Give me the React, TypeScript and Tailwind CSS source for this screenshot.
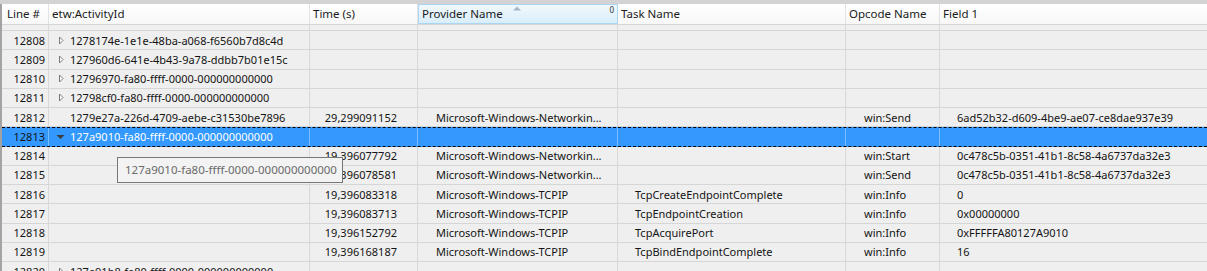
import React from "react";

type Row = {
  line: string;
  id?: string;
  tri?: "closed" | "open";
  time?: string;
  provider?: string;
  task?: string;
  opcode?: string;
  field?: string;
  selected?: boolean;
};

const rows: Row[] = [
  { line: "12807", id: "1278a5b4-2e16-4300-8c1a-4c29e0a9e5c8", tri: "closed" },
  { line: "12808", id: "1278174e-1e1e-48ba-a068-f6560b7d8c4d", tri: "closed" },
  { line: "12809", id: "127960d6-641e-4b43-9a78-ddbb7b01e15c", tri: "closed" },
  { line: "12810", id: "12796970-fa80-ffff-0000-000000000000", tri: "closed" },
  { line: "12811", id: "12798cf0-fa80-ffff-0000-000000000000", tri: "closed" },
  {
    line: "12812",
    id: "1279e27a-226d-4709-aebe-c31530be7896",
    time: "29,299091152",
    provider: "Microsoft-Windows-Networkin...",
    opcode: "win:Send",
    field: "6ad52b32-d609-4be9-ae07-ce8dae937e39",
  },
  { line: "12813", id: "127a9010-fa80-ffff-0000-000000000000", tri: "open", selected: true },
  {
    line: "12814",
    time: "19,396077792",
    provider: "Microsoft-Windows-Networkin...",
    opcode: "win:Start",
    field: "0c478c5b-0351-41b1-8c58-4a6737da32e3",
  },
  {
    line: "12815",
    time: "19,396078581",
    provider: "Microsoft-Windows-Networkin...",
    opcode: "win:Send",
    field: "0c478c5b-0351-41b1-8c58-4a6737da32e3",
  },
  {
    line: "12816",
    time: "19,396083318",
    provider: "Microsoft-Windows-TCPIP",
    task: "TcpCreateEndpointComplete",
    opcode: "win:Info",
    field: "0",
  },
  {
    line: "12817",
    time: "19,396083713",
    provider: "Microsoft-Windows-TCPIP",
    task: "TcpEndpointCreation",
    opcode: "win:Info",
    field: "0x00000000",
  },
  {
    line: "12818",
    time: "19,396152792",
    provider: "Microsoft-Windows-TCPIP",
    task: "TcpAcquirePort",
    opcode: "win:Info",
    field: "0xFFFFFA80127A9010",
  },
  {
    line: "12819",
    time: "19,396168187",
    provider: "Microsoft-Windows-TCPIP",
    task: "TcpBindEndpointComplete",
    opcode: "win:Info",
    field: "16",
  },
  { line: "12820", id: "127a91b8-fa80-ffff-0000-000000000000", tri: "closed" },
];

const ClosedTri = () => (
  <svg width="6" height="9" viewBox="0 0 6 9" className="shrink-0">
    <path d="M1.5 1 L5 4.5 L1.5 8 Z" fill="#ffffff" stroke="#7a7a7a" strokeWidth="1" />
  </svg>
);

const OpenTri = () => (
  <svg width="9" height="6" viewBox="0 0 9 6" className="shrink-0">
    <path d="M0.5 1 L8.5 1 L4.5 5 Z" fill="#3c3c3c" />
  </svg>
);

const DataRow = ({ r }: { r: Row }) => {
  const sel = r.selected;
  const sep = sel ? "border-r border-[#7dbcff]" : "border-r border-[#d9d9d9]";
  const txt = sel ? "text-white" : "text-[#141414]";
  return (
    <div
      className={
        "flex h-[19.25px] items-center " +
        (sel
          ? "bg-[#3399ff] border-y border-dashed border-black"
          : "border-b border-[#d6d6d6]")
      }
    >
      <div className={"w-[47px] h-full flex items-center justify-end pr-[3px] text-[#141414] " + sep}>
        {r.line}
      </div>
      <div className={"w-[261px] h-full flex items-center gap-[5px] pl-[7px] " + txt + " " + sep}>
        <span className="w-[9px] flex justify-center">
          {r.tri === "closed" && <ClosedTri />}
          {r.tri === "open" && <OpenTri />}
        </span>
        <span className="whitespace-nowrap">{r.id}</span>
      </div>
      <div className={"w-[108px] h-full flex items-center justify-end pr-[20px] " + txt + " " + sep}>
        {r.time}
      </div>
      <div className={"w-[200px] h-full flex items-center pl-[18px] overflow-hidden whitespace-nowrap " + txt + " " + sep}>
        {r.provider}
      </div>
      <div className={"w-[228px] h-full flex items-center pl-[17px] whitespace-nowrap " + txt + " " + sep}>
        {r.task}
      </div>
      <div className={"w-[94px] h-full flex items-center pl-[18px] " + txt + " " + sep}>
        {r.opcode}
      </div>
      <div className={"flex-1 h-full flex items-center pl-[17px] whitespace-nowrap " + txt}>
        {r.field}
      </div>
    </div>
  );
};

export default function App() {
  return (
    <div
      className="relative w-[1207px] h-[271px] overflow-hidden bg-[#efefef] text-[11px] leading-none"
      style={{ fontFamily: '"Noto Sans", "Open Sans", sans-serif' }}
    >
      <div className="h-[4px] bg-[#d3d3d3]" />
      <div className="flex h-[267px] border-l-2 border-[#a3a3a3]">
        <div className="flex-1 flex flex-col">
          {/* column headers */}
          <div className="flex h-[21px] shrink-0 bg-gradient-to-b from-white to-[#f7f7f7] border-b border-[#d5d5d5] text-[#1a1a1a] text-[11.5px]">
            <div className="w-[47px] flex items-center pl-[5px] border-r border-[#e3e3e3]">Line #</div>
            <div className="w-[261px] flex items-center pl-[3px] border-r border-[#e3e3e3]">etw:ActivityId</div>
            <div className="w-[108px] flex items-center pl-[3px] border-r border-[#e3e3e3]">Time (s)</div>
            <div className="relative w-[200px] flex items-center pl-[3px] bg-gradient-to-b from-[#f0f8fd] to-[#d9eefa] border border-[#a9d7f3]">
              Provider Name
              <svg width="8" height="5" viewBox="0 0 8 5" className="absolute left-[94px] top-[1px]">
                <path d="M0 4.5 L4 0.5 L8 4.5 Z" fill="#a3b7c9" />
              </svg>
              <span className="absolute right-[3px] top-[1px] text-[8px] text-[#333]">0</span>
            </div>
            <div className="w-[228px] flex items-center pl-[3px] border-r border-[#e3e3e3]">Task Name</div>
            <div className="w-[94px] flex items-center pl-[3px] border-r border-[#e3e3e3]">Opcode Name</div>
            <div className="flex-1 flex items-center pl-[3px]">Field 1</div>
          </div>
          {/* rows */}
          <div className="flex-1 overflow-hidden">
            <div className="-mt-[13.25px]">
              {rows.map((r) => (
                <DataRow key={r.line} r={r} />
              ))}
            </div>
          </div>
        </div>
      </div>
      {/* tooltip */}
      <div className="absolute left-[117px] top-[157px] w-[226px] h-[26px] bg-[#f3f3f3] border border-[#767676] flex items-center pl-[7px] text-[#6a6a6a] text-[11.5px] whitespace-nowrap">
        127a9010-fa80-ffff-0000-000000000000
      </div>
    </div>
  );
}
